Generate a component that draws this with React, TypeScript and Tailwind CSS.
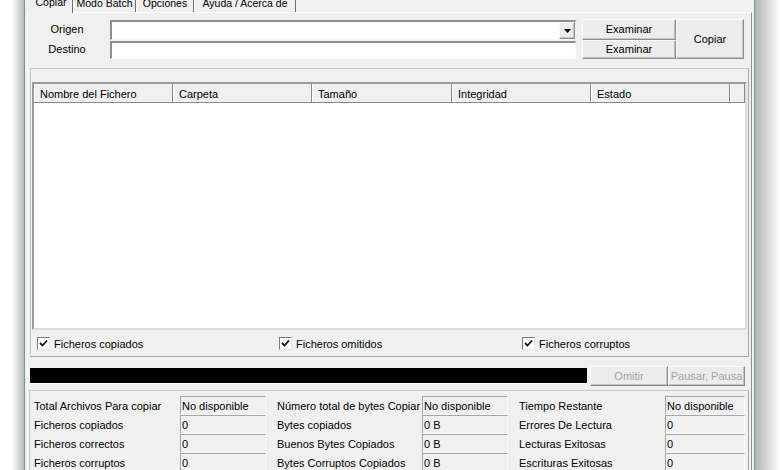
import React from "react";

const btn =
  "flex items-center justify-center bg-[#ececec] border border-t-[#fcfcfc] border-l-[#fcfcfc] border-r-[#8d8d8d] border-b-[#8d8d8d] shadow-[inset_-1px_-1px_0_#c4c4c4]";
const sunken =
  "bg-white border-t-2 border-l-2 border-t-[#8e8e8e] border-l-[#8e8e8e] border-b border-r border-b-[#f7f7f7] border-r-[#f7f7f7]";

function Check({ label }: { label: string }) {
  return (
    <div className="flex items-center gap-[4px]">
      {/* classic 13px checkbox */}
      <div className="flex h-[13px] w-[13px] items-center justify-center border border-t-[#7a7a7a] border-l-[#7a7a7a] border-b-[#e6e6e6] border-r-[#e6e6e6] bg-white">
        <svg width="9" height="9" viewBox="0 0 9 9">
          <path d="M1 4 L3.5 6.5 L8 1.5" stroke="#111" strokeWidth="1.8" fill="none" />
        </svg>
      </div>
      <span className="pt-[2px]">{label}</span>
    </div>
  );
}

function StatBox({ value }: { value: string }) {
  return (
    <div className="flex h-[19px] items-center border-t border-l border-t-[#a5a5a5] border-l-[#a5a5a5] border-b border-r border-b-[#fafafa] border-r-[#fafafa] bg-[#f0f0f0] pl-[1px] pt-[2px]">
      {value}
    </div>
  );
}

const stats = [
  ["Total Archivos Para copiar", "No disponible", "Número total de bytes Copiar", "No disponible", "Tiempo Restante", "No disponible"],
  ["Ficheros copiados", "0", "Bytes copiados", "0 B", "Errores De Lectura", "0"],
  ["Ficheros correctos", "0", "Buenos Bytes Copiados", "0 B", "Lecturas Exitosas", "0"],
  ["Ficheros corruptos", "0", "Bytes Corruptos Copiados", "0 B", "Escrituras Exitosas", "0"],
];

const columns = [
  { name: "Nombre del Fichero", w: "w-[139px]" },
  { name: "Carpeta", w: "w-[139px]" },
  { name: "Tamaño", w: "w-[140px]" },
  { name: "Integridad", w: "w-[139px]" },
  { name: "Estado", w: "w-[139px]" },
];

export default function App() {
  return (
    <div className="flex h-[470px] w-[780px] overflow-hidden bg-white font-['Liberation_Sans',Arial,sans-serif] text-[11px] leading-none text-black">
      {/* left shadow + frame */}
      <div className="w-[24px] bg-gradient-to-r from-white from-50% to-[#b9b9b9]" />
      <div className="w-px bg-[#6aa37e]" />

      {/* window body */}
      <div className="flex w-[729px] flex-col bg-[#f0f0f0]">
        {/* Tabs */}
        <div className="relative z-10 -mt-[9px] flex h-[22px] items-start pl-[5px] text-[10.5px]">
          <div className="flex h-[22px] w-[43px] items-center justify-center border-r border-r-[#6e6e6e] bg-[#f0f0f0] pt-[1px]">
            Copiar
          </div>
          <div className="mt-[2px] flex h-[19px] w-[63px] items-center justify-center border-r border-r-[#6e6e6e] border-l border-l-white pt-[2px]">
            Modo Batch
          </div>
          <div className="mt-[2px] flex h-[19px] w-[58px] items-center justify-center border-r border-r-[#6e6e6e] border-l border-l-white pt-[2px]">
            Opciones
          </div>
          <div className="mt-[2px] flex h-[19px] w-[102px] items-center justify-center border-r border-r-[#6e6e6e] border-l border-l-white pt-[2px]">
            Ayuda / Acerca de
          </div>
        </div>

        {/* Tab panel */}
        <div className="-mt-px ml-[2px] flex w-[725px] flex-1 flex-col border border-t-white border-l-white border-r-[#8f8f8f] border-b-[#8f8f8f]">
          {/* Origen / Destino */}
          <div className="mt-[6px] flex h-[40px]">
            <div className="flex w-[78px] flex-col">
              <div className="flex h-[21px] items-center justify-center pt-[1px]">Origen</div>
              <div className="flex h-[21px] items-center justify-center pt-[1px]">Destino</div>
            </div>
            <div className="ml-[4px] flex w-[466px] flex-col">
              <div className={`mt-[1px] flex h-[20px] items-stretch justify-end ${sunken}`}>
                <div className={`flex w-[16px] items-center justify-center ${btn}`}>
                  <svg width="7" height="4" viewBox="0 0 7 4">
                    <path d="M0 0 H7 L3.5 4 Z" fill="#000" />
                  </svg>
                </div>
              </div>
              <div className={`mt-[1px] h-[18px] ${sunken}`} />
            </div>
            <div className="ml-[6px] flex w-[94px] flex-col">
              <div className={`h-[21px] ${btn}`}>Examinar</div>
              <div className={`h-[19px] ${btn}`}>Examinar</div>
            </div>
            <div className={`w-[68px] ${btn}`}>Copiar</div>
          </div>

          {/* File list group */}
          <div className="ml-[2px] mt-[9px] flex h-[289px] w-[719px] flex-col border border-t-[#c9c9c9] border-l-[#c9c9c9] border-r-[#a7a7a7] border-b-[#a7a7a7] px-px pt-[13px]">
            <div className="flex h-[248px] flex-col border-2 border-t-[#9a9a9a] border-l-[#9a9a9a] border-r-[#dcdcdc] border-b-[#dcdcdc] bg-white">
              <div className="flex h-[19px] border-b border-b-[#8a8a8a] bg-[#f0f0f0]">
                {columns.map((c) => (
                  <div
                    key={c.name}
                    className={`${c.w} flex items-center border-r border-r-[#8a8a8a] border-l border-l-white pl-[5px] pt-[2px]`}
                  >
                    {c.name}
                  </div>
                ))}
                <div className="flex-1 border-r border-r-[#8a8a8a] border-l border-l-white" />
              </div>
            </div>
            <div className="grid h-[25px] grid-cols-[242px_243px_1fr] items-center pl-[5px] pt-[2px]">
              <Check label="Ficheros copiados" />
              <Check label="Ficheros omitidos" />
              <Check label="Ficheros corruptos" />
            </div>
          </div>

          {/* Progress */}
          <div className="mt-[9px] flex h-[20px] items-center">
            <div className="ml-[2px] h-[16px] w-[557px] border-b border-b-white bg-black" />
            <div className={`ml-[3px] h-[20px] w-[78px] pt-[1px] text-[#a3a3a3] ${btn}`}>Omitir</div>
            <div className={`h-[20px] w-[77px] pt-[1px] text-[#a3a3a3] ${btn}`}>Pausar, Pausa</div>
          </div>

          {/* Stats group */}
          <div className="ml-[1px] mt-[4px] w-[720px] flex-1 border border-t-[#c9c9c9] border-l-[#c9c9c9] border-r-[#a7a7a7] border-b-0 pt-[5px]">
            {stats.map((r) => (
              <div key={r[0]} className="grid grid-cols-[150px_86px_156px_86px_157px_80px]">
                <div className="flex items-center pl-[4px] pt-[2px]">{r[0]}</div>
                <StatBox value={r[1]} />
                <div className="flex items-center pl-[11px] pt-[2px]">{r[2]}</div>
                <StatBox value={r[3]} />
                <div className="flex items-center pl-[11px] pt-[2px]">{r[4]}</div>
                <StatBox value={r[5]} />
              </div>
            ))}
          </div>
        </div>
      </div>

      {/* right frame + shadow */}
      <div className="w-px bg-[#6aa37e]" />
      <div className="flex-1 bg-gradient-to-r from-[#b3b3b3] to-white" />
    </div>
  );
}
